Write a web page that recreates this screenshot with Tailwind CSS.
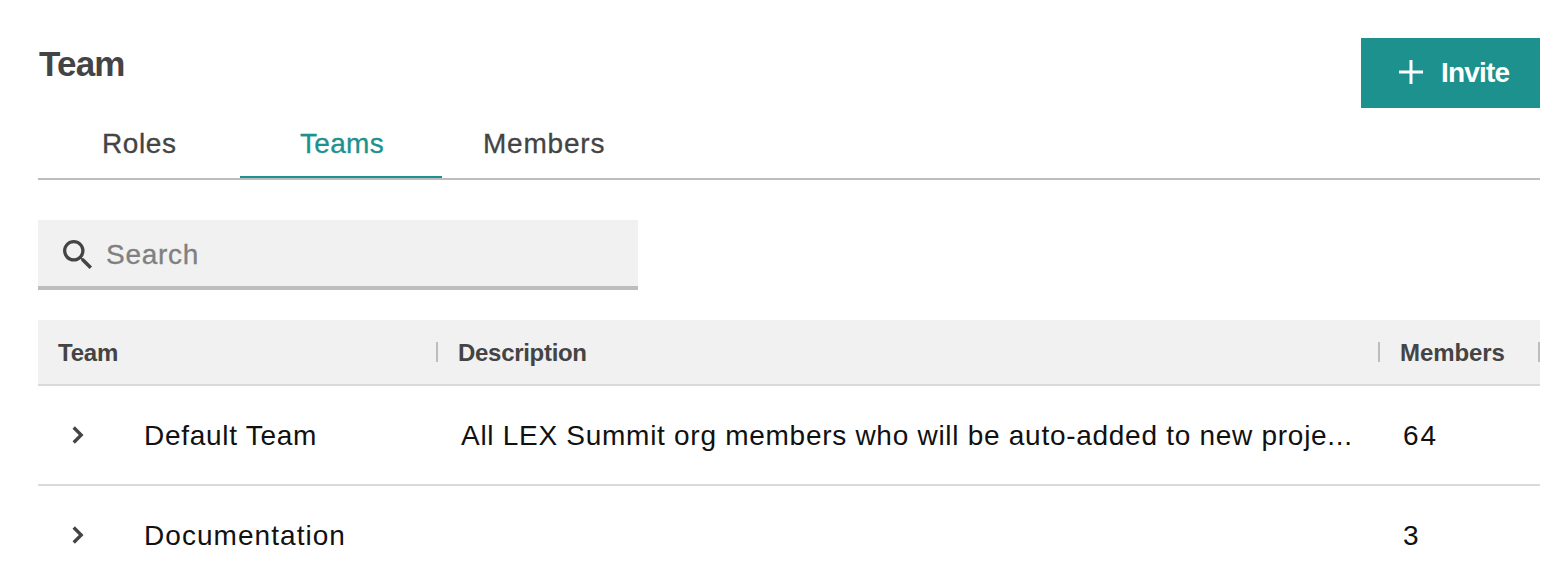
<!DOCTYPE html>
<html lang="en">
<head>
<meta charset="utf-8">
<title>Team</title>
<script src="https://cdn.jsdelivr.net/npm/@tailwindcss/browser@4"></script>
</head>
<body class="h-[576px] overflow-hidden bg-white font-['Liberation_Sans',Arial,sans-serif] text-[#444]">
<main class="ml-[38px] w-[1502px] pt-[38px]">
  <header class="flex h-[142px] justify-between border-b-2 border-[#bdbdbd]">
    <div class="flex flex-col justify-between">
      <h1 class="mt-1 pl-px text-[35px] leading-[44px] font-bold tracking-[-0.8px]">Team</h1>
      <nav class="flex text-[28px] leading-[72px] [-webkit-text-stroke:0.3px_currentColor]">
        <a class="h-[70px] w-[202px] pl-[64px] tracking-[0.6px]">Roles</a>
        <a class="h-[70px] w-[202px] border-b-2 border-[#1d918d] pl-[60px] tracking-[0.3px] text-[#1d918d]">Teams</a>
        <a class="h-[70px] w-[202px] pl-[41px] tracking-[0.8px]">Members</a>
      </nav>
    </div>
    <button class="flex h-[70px] w-[179px] items-center bg-[#1d918d] pl-[38px] text-[28px] font-bold text-white">
      <svg class="mr-[18px] mb-[2px] h-6 w-6" viewBox="0 0 24 24" fill="none" stroke="currentColor" stroke-width="3"><path d="M12 0V24M0 12H24"/></svg>
      <span class="tracking-[-0.8px]">Invite</span>
    </button>
  </header>
  <div class="mt-10 flex h-[70px] w-[600px] items-center border-b-4 border-[#bdbdbd] bg-[#f1f1f1] pt-[2px] pl-[25px] text-[28px] text-[#808080]">
    <svg class="mr-[14px] h-[29px] w-[29px] text-[#444]" viewBox="3 3 17.49 17.49" fill="currentColor"><path d="M15.5 14h-.79l-.28-.27A6.471 6.471 0 0 0 16 9.5 6.5 6.5 0 1 0 9.5 16c1.61 0 3.09-.59 4.23-1.57l.27.28v.79l5 4.99L20.49 19l-4.99-5zm-6 0C7.01 14 5 11.99 5 9.5S7.01 5 9.5 5 14 7.01 14 9.5 11.99 14 9.5 14z"/></svg>
    <span class="pt-px tracking-[0.7px] [-webkit-text-stroke:0.3px_currentColor]">Search</span>
  </div>
  <section class="mt-[30px]">
    <div class="flex h-[66px] items-center border-b-2 border-[#dadada] bg-[#f1f1f1] text-[24px] font-bold">
      <div class="flex w-[400px] items-center justify-between pl-5"><span class="pt-[2px] tracking-[-0.2px]">Team</span><i class="h-5 w-0.5 bg-[#bdbdbd]"></i></div>
      <div class="flex w-[942px] items-center justify-between pl-5"><span class="pt-[2px] tracking-[-0.3px]">Description</span><i class="h-5 w-0.5 bg-[#bdbdbd]"></i></div>
      <div class="flex w-[160px] items-center justify-between pl-5"><span class="pt-[2px] tracking-[-0.1px]">Members</span><i class="h-5 w-0.5 bg-[#bdbdbd]"></i></div>
    </div>
    <div class="flex h-[100px] items-center border-b-2 border-[#dadada] text-[28px] text-[#111]">
      <svg class="ml-[34px] h-[18px] w-[12px] text-[#444]" viewBox="0 0 12 18" fill="none" stroke="currentColor" stroke-width="3.3"><path d="M1.7 1.5 9.2 9l-7.5 7.5"/></svg>
      <span class="ml-[60px] w-[317px] pt-[2px] tracking-[0.72px]">Default Team</span><span class="w-[942px] pt-[2px] tracking-[0.72px]">All LEX Summit org members who will be auto-added to new proje...</span><span class="pt-[2px] tracking-[2px]">64</span>
    </div>
    <div class="flex h-[98px] items-center text-[28px] text-[#111]">
      <svg class="ml-[34px] h-[18px] w-[12px] text-[#444]" viewBox="0 0 12 18" fill="none" stroke="currentColor" stroke-width="3.3"><path d="M1.7 1.5 9.2 9l-7.5 7.5"/></svg>
      <span class="ml-[60px] w-[1259px] pt-[2px] tracking-[1.05px]">Documentation</span><span class="pt-[2px]">3</span>
    </div>
  </section>
</main>
</body>
</html>
